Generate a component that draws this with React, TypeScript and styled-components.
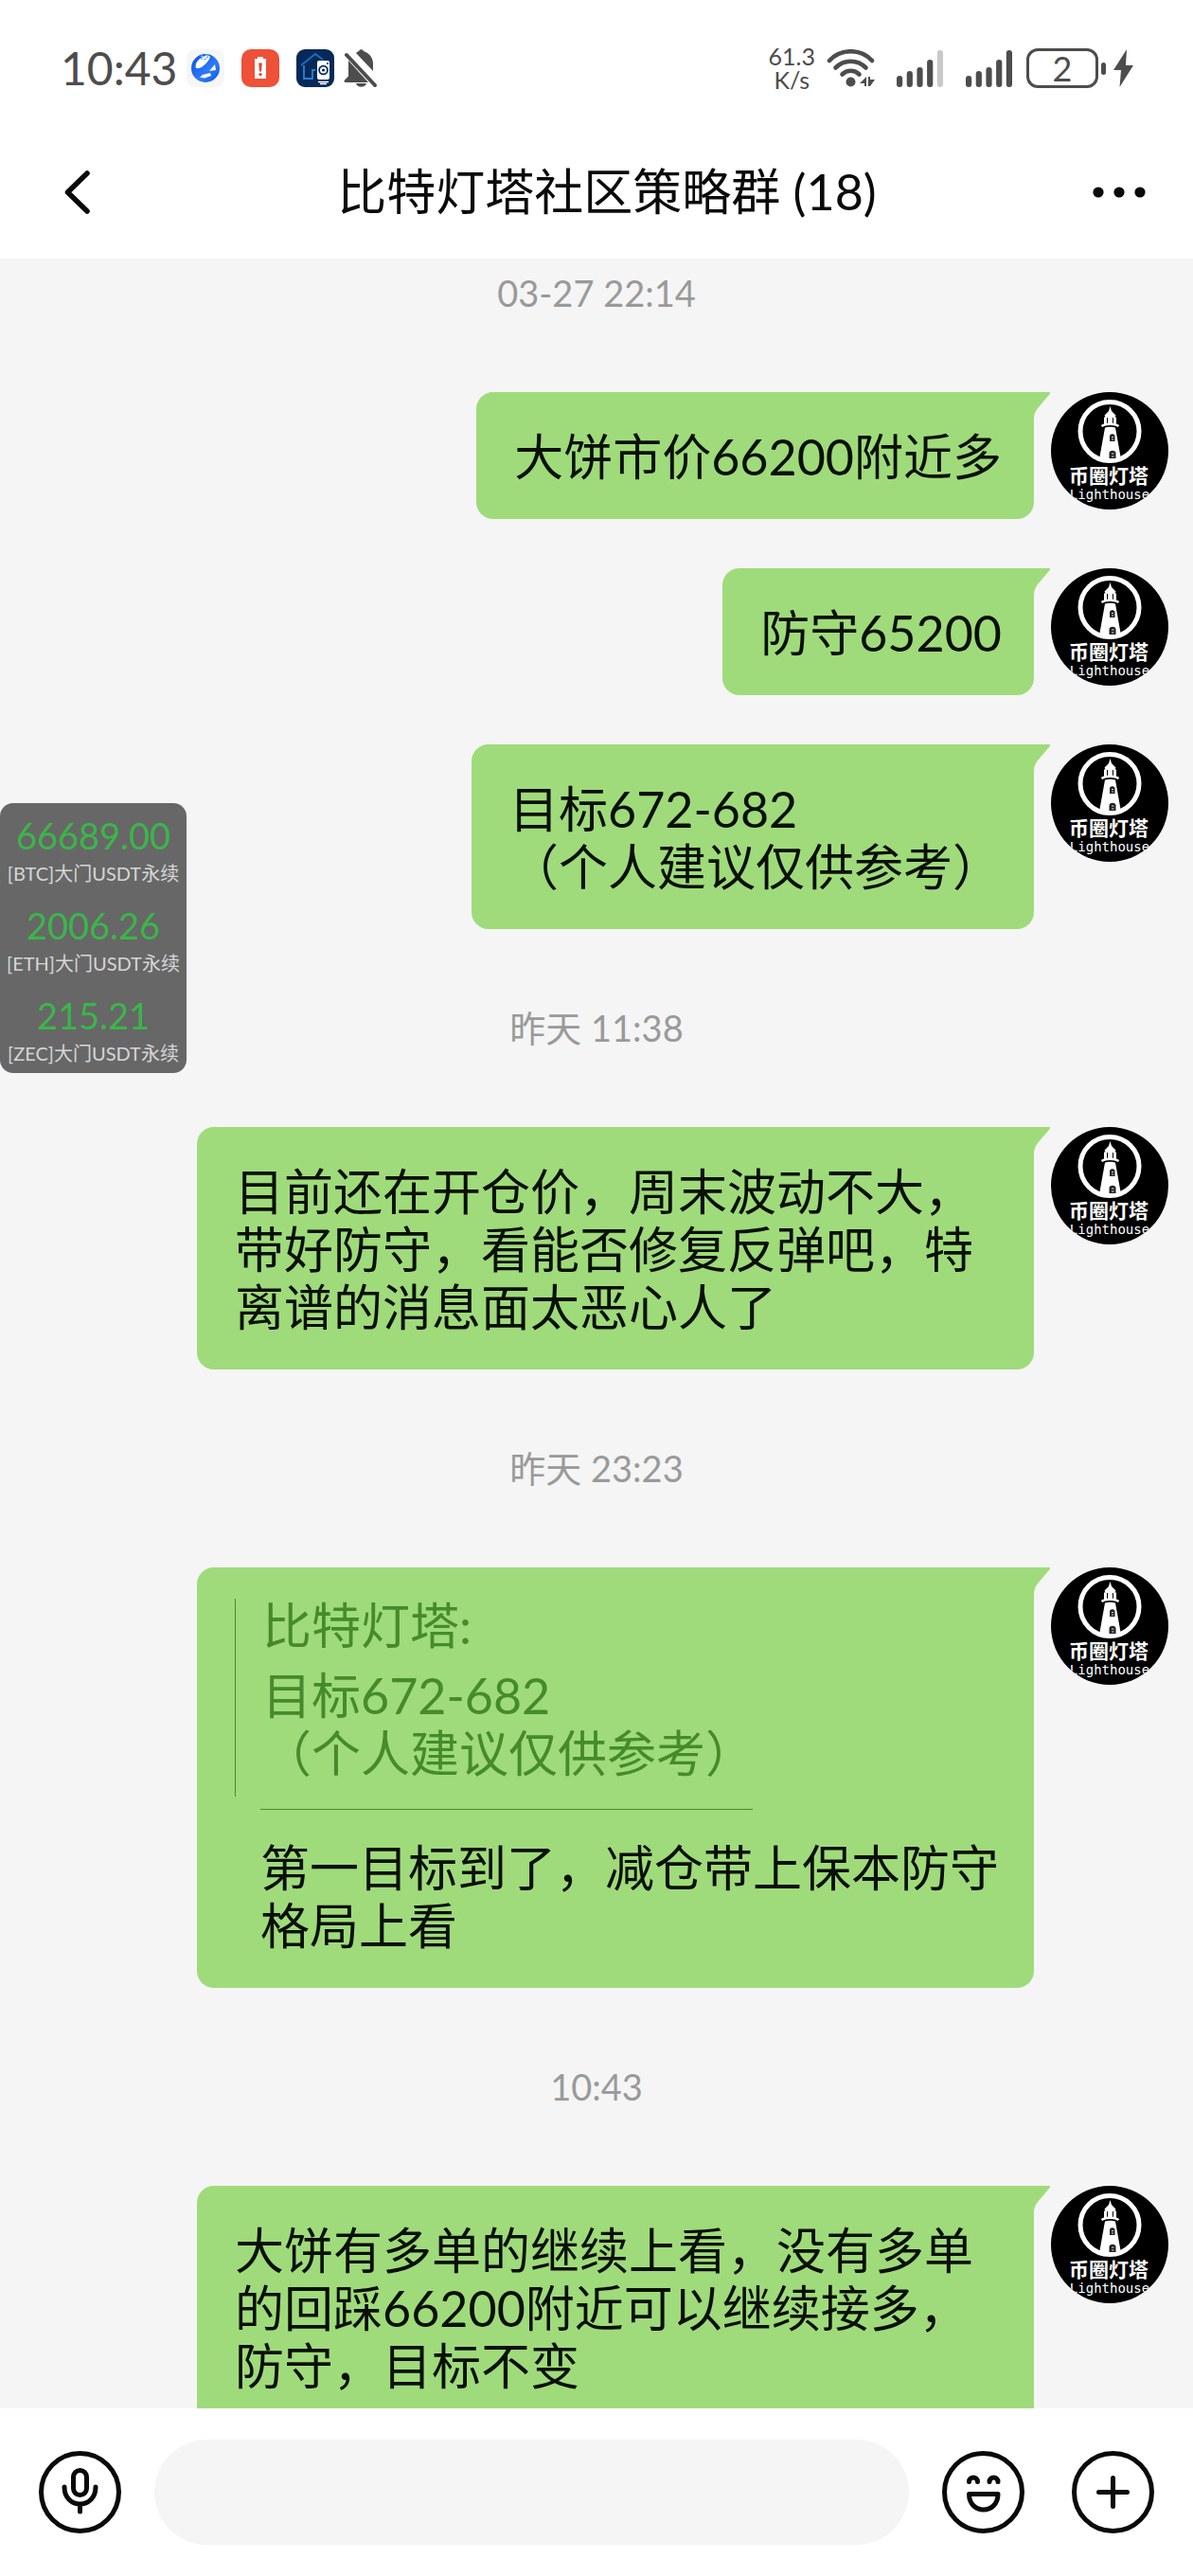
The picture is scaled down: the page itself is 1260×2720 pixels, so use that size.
import React from "react";
import styled, { createGlobalStyle, css } from "styled-components";

const colors = {
  page: "#f5f5f5",
  surface: "#ffffff",
  ink: "#0a0a0a",
  status: "#4d4d4d",
  muted: "#9a9a9a",
  bubble: "#9fdb7b",
  bubbleInk: "#0a1004",
  quote: "#468b2b",
  ticker: "#676767",
  up: "#3bb54a",
};

const GlobalStyle = createGlobalStyle`
  *, *::before, *::after { box-sizing: border-box; }
  body {
    margin: 0;
    background: ${colors.page};
    font-family: Lato, "Noto Sans CJK SC", sans-serif;
    text-spacing-trim: space-all;
  }
  button { font: inherit; color: inherit; }
`;

const Screen = styled.div`
  position: relative;
  display: flex;
  flex-direction: column;
  height: 100vh;
  background: ${colors.page};
`;

/* Status bar */

const StatusBar = styled.div`
  flex: none;
  display: flex;
  align-items: center;
  justify-content: space-between;
  height: 132px;
  padding: 12px 63px 0 64px;
  background: ${colors.surface};
  color: ${colors.status};
`;

const StatusGroup = styled.div<{ $gap: number }>`
  display: flex;
  align-items: center;
  gap: ${(p) => p.$gap}px;

  svg {
    display: block;
  }
`;

const Clock = styled.time`
  font-size: 48px;
  line-height: 56px;
`;

const Speed = styled.div`
  display: flex;
  flex-direction: column;
  font-size: 25px;
  line-height: 25px;
  text-align: center;
`;

const Cellular = styled(StatusGroup)`
  padding: 0 3px 0 11px;
`;

const BatteryBody = styled.div`
  display: flex;
  align-items: center;
  justify-content: center;
  width: 76px;
  height: 42px;
  border: 3px solid ${colors.status};
  border-radius: 12px;
  font-size: 36px;
  line-height: 36px;
`;

const BatteryTip = styled.div`
  width: 5px;
  height: 13px;
  border-radius: 3px;
  background: ${colors.status};
`;

/* Title bar */

const TitleBar = styled.header`
  flex: none;
  display: flex;
  align-items: center;
  height: 141px;
  padding: 0 50px 0 68px;
  background: ${colors.surface};
  color: ${colors.ink};
`;

const BarButton = styled.button<{ $width: number }>`
  flex: none;
  display: flex;
  align-items: center;
  width: ${(p) => p.$width}px;
  height: 88px;
  padding: 0;
  border: 0;
  background: none;
`;

const Title = styled.h1`
  flex: 1;
  margin: 0;
  font-size: 52px;
  line-height: 61px;
  font-weight: 400;
  text-align: center;
`;

/* Conversation */

const Conversation = styled.main`
  flex: 1;
  min-height: 0;
  display: flex;
  flex-direction: column;
  gap: 52px;
  overflow-y: auto;
  scrollbar-width: none;
`;

const Stamp = styled.time`
  flex: none;
  margin: 24px 0 25px;
  font-size: 38px;
  line-height: 56px;
  text-align: center;
  color: ${colors.muted};

  &:first-child {
    margin-top: 8px;
  }
`;

const MessageRow = styled.article`
  flex: none;
  display: flex;
  justify-content: flex-end;
  align-items: flex-start;
  gap: 18px;
  padding: 0 26px 0 208px;
`;

const Bubble = styled.div<{ $quoting?: boolean }>`
  position: relative;
  min-width: 0;
  padding: 38px 34px 35px 40px;
  border-radius: 18px 0 18px 18px;
  background: ${colors.bubble};
  color: ${colors.bubbleInk};
  font-size: 52px;
  line-height: 61px;

  ${(p) =>
    p.$quoting &&
    css`
      padding-top: 33px;
    `}

  &::after {
    content: "";
    position: absolute;
    top: 0;
    left: 100%;
    width: 17px;
    height: 30px;
    background: ${colors.bubble};
    clip-path: path("M0 0H17C17 2 16 3 15 4L4 17C1 21 0 24 0 30Z");
  }
`;

const Paragraph = styled.p`
  margin: 0;
  white-space: pre-line;
`;

const Quote = styled.blockquote`
  margin: 0 0 13px;
  padding: 0 0 15px 28px;
  border-left: 1px solid ${colors.quote};
  color: ${colors.quote};
`;

const QuoteSender = styled.cite`
  display: block;
  margin-bottom: 16px;
  font-style: normal;
  line-height: 56px;
`;

const Reply = styled.div`
  padding-left: 27px;
`;

const Divider = styled.hr`
  width: 520px;
  max-width: 100%;
  height: 1px;
  margin: 0 0 31px;
  border: 0;
  background: ${colors.quote};
`;

const AvatarFrame = styled.div`
  flex: none;
  width: 124px;
  height: 124px;
  overflow: hidden;
  border-radius: 50%;
  background: #000;

  svg {
    display: block;
  }
`;

/* Floating price ticker */

const Ticker = styled.aside`
  position: absolute;
  top: 848px;
  left: 0;
  width: 197px;
  border-radius: 14px;
  background: ${colors.ticker};
  text-align: center;
`;

const Quotation = styled.div`
  padding: 10px 0 5px;
`;

const Price = styled.div`
  font-size: 38px;
  line-height: 48px;
  color: ${colors.up};
`;

const Pair = styled.div`
  font-size: 20px;
  line-height: 32px;
  white-space: nowrap;
  color: #d6d6d6;
`;

/* Composer */

const Composer = styled.form`
  flex: none;
  display: flex;
  align-items: center;
  gap: 35px;
  height: 177px;
  padding: 0 41px;
  background: ${colors.surface};
`;

const ComposerActions = styled.div`
  display: flex;
  gap: 50px;
`;

const RoundButton = styled.button`
  flex: none;
  width: 87px;
  height: 87px;
  padding: 0;
  border: 0;
  border-radius: 50%;
  background: none;
  color: ${colors.ink};

  svg {
    display: block;
  }
`;

const MessageInput = styled.input`
  flex: 1;
  min-width: 0;
  height: 111px;
  padding: 0 48px;
  border: 0;
  border-radius: 56px;
  outline: 0;
  background: ${colors.page};
  font: inherit;
  font-size: 52px;
`;

/* Drawings */

const GlobeIcon = () => (
  <svg width="40" height="40" viewBox="0 0 40 40" aria-hidden="true">
    <defs>
      <linearGradient id="globe" x1="0" y1="0" x2="1" y2="1">
        <stop offset="0" stopColor="#0a4fe8" />
        <stop offset="0.6" stopColor="#2f7bf5" />
        <stop offset="1" stopColor="#0d57e0" />
      </linearGradient>
    </defs>
    <rect width="40" height="40" rx="9" fill="#f6f6f7" />
    <circle cx="20" cy="20" r="15" fill="url(#globe)" />
    <path d="M10 20C8 15 13 9 20 7c5-1 6 1 3 5-4 5-8 9-13 8z" fill="#fff" />
    <path d="M15 7l3 1m2-2l3 1m-8 3l2 0m4-1l2-1m-5 3l3-1" stroke="#8ab6fb" strokeWidth="1.5" />
    <path d="M30 16l1 6-7 1z" fill="#fff" />
    <path d="M17 27l8-2 1 3-7 2.500-5-1z" fill="#fff" />
  </svg>
);

const BatteryAlertIcon = () => (
  <svg width="40" height="40" viewBox="0 0 40 40" aria-hidden="true">
    <rect width="40" height="40" rx="10" fill="#ee5038" />
    <path d="M17 8h6v2h3v21H14V10h3z" fill="#fff" />
    <path d="M18.2 14.5h3.6l-.8 9h-2z" fill="#e5452f" />
    <circle cx="20" cy="26.6" r="1.7" fill="#e5452f" />
  </svg>
);

const HomeCameraIcon = () => (
  <svg width="40" height="40" viewBox="0 0 40 40" aria-hidden="true">
    <rect width="40" height="40" rx="9" fill="#052a58" />
    <path d="M5 17L20 5l8 6" fill="none" stroke="#1f6cc0" strokeWidth="1.8" />
    <path d="M8 17v14h9v-9h3" fill="none" stroke="#2f7fd2" strokeWidth="1.8" />
    <rect x="22" y="12" width="13" height="20" rx="2" fill="#fff" />
    <circle cx="28.5" cy="22" r="4.4" fill="none" stroke="#052a58" strokeWidth="1.8" />
    <circle cx="28.5" cy="22" r="1.6" fill="#052a58" />
    <circle cx="33" cy="15" r="1" fill="#052a58" />
    <path d="M23 34.500h11M25 36.500h7" stroke="#fff" strokeWidth="1.300" />
  </svg>
);

const BellOffIcon = () => (
  <svg width="36" height="40" viewBox="0 0 36 40" fill={colors.status} aria-hidden="true">
    <path d="M13 4c1-1 2-1.500 3-2 1-2.500 4-2.500 5 0 6 2 10 7 10 13v8z" />
    <path d="M5 12L26 35H2c-1.500 0-2-1.500-1-2.500l4-4z" />
    <path d="M3 6L33 38" stroke={colors.status} strokeWidth="4" strokeLinecap="round" />
    <path d="M13 36h11c-1 5-10 5-11 0z" />
  </svg>
);

const WifiIcon = () => (
  <svg width="51" height="40" viewBox="0 0 51 40" aria-hidden="true">
    <g fill="none" stroke={colors.status} strokeWidth="4.600" strokeLinecap="round">
      <path d="M3 12C15-1 36-1 48 12" />
      <path d="M9.500 19.500c9-9 23-9 32 0" />
      <path d="M16.500 26.500c5-5 13-5 18 0" />
    </g>
    <circle cx="25.500" cy="34.500" r="5" fill={colors.status} />
    <path d="M42 29v10h-2v-3h-5zM44 29h2v3h5l-5 7h-2z" fill={colors.status} />
  </svg>
);

const SignalIcon = ({ weak = false }: { weak?: boolean }) => {
  const heights = [12, 17, 21, 29, 39];
  return (
    <svg width="49" height="40" viewBox="0 0 49 40" aria-hidden="true">
      {heights.map((h, i) => (
        <rect
          key={h}
          x={i * 10.7}
          y={40 - h}
          width="6.2"
          height={h}
          rx="3"
          fill={weak && i === 4 ? "#c9c9c9" : colors.status}
        />
      ))}
    </svg>
  );
};

const BoltIcon = () => (
  <svg width="21" height="40" viewBox="0 0 21 40" aria-hidden="true">
    <path d="M14 0L0 22h8L6.500 40 21 17h-8z" fill={colors.status} />
  </svg>
);

const BackIcon = () => (
  <svg width="28" height="46" viewBox="0 0 28 46" aria-hidden="true">
    <path
      d="M24 3L3.500 23 24 43"
      fill="none"
      stroke="currentColor"
      strokeWidth="5.500"
      strokeLinecap="round"
      strokeLinejoin="round"
    />
  </svg>
);

const MoreIcon = () => (
  <svg width="56" height="12" viewBox="0 0 56 12" fill="currentColor" aria-hidden="true">
    <circle cx="6" cy="6" r="5.600" />
    <circle cx="28" cy="6" r="5.600" />
    <circle cx="50" cy="6" r="5.600" />
  </svg>
);

const RoundIcon = ({ children }: { children: React.ReactNode }) => (
  <svg
    width="87"
    height="87"
    viewBox="0 0 87 87"
    fill="none"
    stroke="currentColor"
    strokeWidth="5"
    strokeLinecap="round"
    strokeLinejoin="round"
    aria-hidden="true"
  >
    <circle cx="43.500" cy="43.500" r="41" />
    {children}
  </svg>
);

const Avatar = () => (
  <AvatarFrame>
    <svg width="124" height="124" viewBox="0 0 124 124" role="img" aria-label="币圈灯塔">
      <circle cx="62" cy="41.500" r="31" fill="none" stroke="#fff" strokeWidth="5" />
      <path d="M62.500 15l1.500 5 4.500 4.500-1 2H69V34h-13v-7.500h1.500l-1-2 4.500-4.500z" fill="#fff" />
      <path d="M59.500 27v7M65.500 27v7" stroke="#000" strokeWidth="1" />
      <path d="M53.500 36c4-3 14-3 18 0" fill="none" stroke="#fff" strokeWidth="2.500" />
      <path d="M57 37.500c3-1 8-1 11 0L74 71c-6 4-17 4-23 0z" fill="#fff" />
      <path d="M62 52v-6c1-2.500 4.500-2.500 5.500 0v6z" fill="#222" />
      <path d="M61.500 70v-6c1-3 6-3 7 0v6z" fill="#222" />
      <path d="M64 47.500h2M64 50h2M64 65h2.500M64 68h2.500" stroke="#ddd" strokeWidth="1" />
      <text
        x="61"
        y="96"
        textAnchor="middle"
        fill="#fff"
        fontFamily="'Noto Sans CJK SC', sans-serif"
        fontWeight="700"
        fontSize="21"
      >
        币圈灯塔
      </text>
      <text
        x="62"
        y="113"
        textAnchor="middle"
        fill="#fff"
        fontFamily="'DejaVu Sans Mono', monospace"
        fontSize="14"
      >
        Lighthouse
      </text>
    </svg>
  </AvatarFrame>
);

/* Content */

type Entry =
  | { kind: "time"; text: string }
  | { kind: "message"; text: string; quote?: { sender: string; text: string } };

const target = "目标672-682\n（个人建议仅供参考）";

const entries: Entry[] = [
  { kind: "time", text: "03-27 22:14" },
  { kind: "message", text: "大饼市价66200附近多" },
  { kind: "message", text: "防守65200" },
  { kind: "message", text: target },
  { kind: "time", text: "昨天 11:38" },
  {
    kind: "message",
    text: "目前还在开仓价，周末波动不大，带好防守，看能否修复反弹吧，特离谱的消息面太恶心人了",
  },
  { kind: "time", text: "昨天 23:23" },
  {
    kind: "message",
    text: "第一目标到了，减仓带上保本防守格局上看",
    quote: { sender: "比特灯塔:", text: target },
  },
  { kind: "time", text: "10:43" },
  {
    kind: "message",
    text: "大饼有多单的继续上看，没有多单的回踩66200附近可以继续接多，防守，目标不变",
  },
];

const quotations = [
  { price: "66689.00", pair: "[BTC]大门USDT永续" },
  { price: "2006.26", pair: "[ETH]大门USDT永续" },
  { price: "215.21", pair: "[ZEC]大门USDT永续" },
];

export default function App() {
  return (
    <>
      <GlobalStyle />
      <Screen>
        <StatusBar>
          <StatusGroup $gap={10}>
            <Clock>10:43</Clock>
            <StatusGroup $gap={18}>
              <GlobeIcon />
              <BatteryAlertIcon />
              <HomeCameraIcon />
            </StatusGroup>
            <BellOffIcon />
          </StatusGroup>
          <StatusGroup $gap={12}>
            <Speed>
              <span>61.3</span>
              <span>K/s</span>
            </Speed>
            <WifiIcon />
            <Cellular $gap={24}>
              <SignalIcon weak />
              <SignalIcon />
            </Cellular>
            <StatusGroup $gap={8}>
              <StatusGroup $gap={3}>
                <BatteryBody>2</BatteryBody>
                <BatteryTip />
              </StatusGroup>
              <BoltIcon />
            </StatusGroup>
          </StatusGroup>
        </StatusBar>

        <TitleBar>
          <BarButton type="button" $width={60} aria-label="返回">
            <BackIcon />
          </BarButton>
          <Title>比特灯塔社区策略群 (18)</Title>
          <BarButton type="button" $width={56} aria-label="更多">
            <MoreIcon />
          </BarButton>
        </TitleBar>

        <Conversation>
          {entries.map((entry, i) =>
            entry.kind === "time" ? (
              <Stamp key={i}>{entry.text}</Stamp>
            ) : (
              <MessageRow key={i}>
                <Bubble $quoting={Boolean(entry.quote)}>
                  {entry.quote ? (
                    <>
                      <Quote>
                        <QuoteSender>{entry.quote.sender}</QuoteSender>
                        <Paragraph>{entry.quote.text}</Paragraph>
                      </Quote>
                      <Reply>
                        <Divider />
                        <Paragraph>{entry.text}</Paragraph>
                      </Reply>
                    </>
                  ) : (
                    <Paragraph>{entry.text}</Paragraph>
                  )}
                </Bubble>
                <Avatar />
              </MessageRow>
            )
          )}
        </Conversation>

        <Composer onSubmit={(e) => e.preventDefault()}>
          <RoundButton type="button" aria-label="语音">
            <RoundIcon>
              <rect x="36.500" y="20.500" width="14" height="26" rx="7" />
              <path d="M27 38c0 24 33 24 33 0M43.500 57v7" />
            </RoundIcon>
          </RoundButton>
          <MessageInput type="text" aria-label="消息" />
          <ComposerActions>
            <RoundButton type="button" aria-label="表情">
              <RoundIcon>
                <path d="M28.500 32.500c0-6 9-6 9 0M50 32.500c0-6 9-6 9 0" />
                <path d="M28.500 45.500h30.500c0 22-30.500 22-30.500 0z" />
              </RoundIcon>
            </RoundButton>
            <RoundButton type="button" aria-label="添加">
              <RoundIcon>
                <path d="M43.500 28.500v30M28.500 43.500h30" />
              </RoundIcon>
            </RoundButton>
          </ComposerActions>
        </Composer>

        <Ticker>
          {quotations.map((q) => (
            <Quotation key={q.pair}>
              <Price>{q.price}</Price>
              <Pair>{q.pair}</Pair>
            </Quotation>
          ))}
        </Ticker>
      </Screen>
    </>
  );
}
